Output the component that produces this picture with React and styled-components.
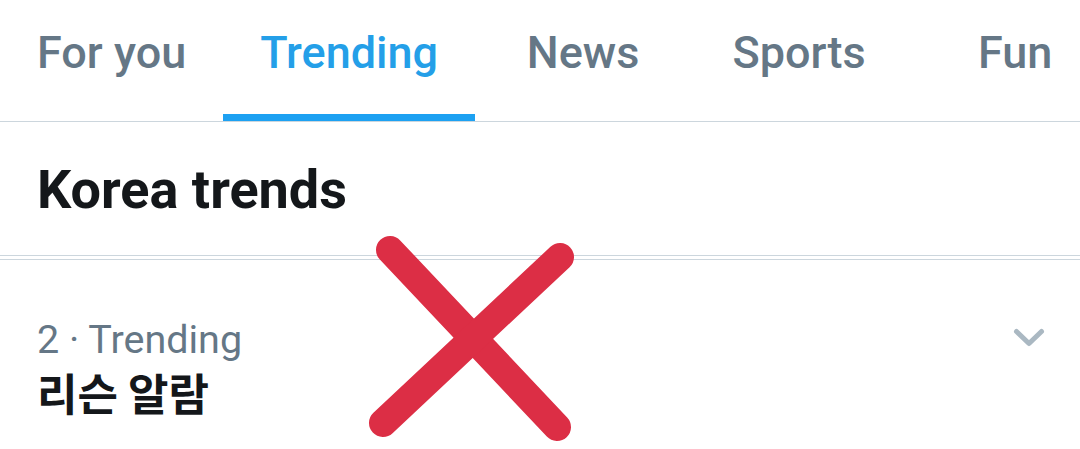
import React from 'react';
import styled, { createGlobalStyle } from 'styled-components';

const colors = {
    blue: '#1da1f2',
    blueText: '#249fe8',
    grey: '#657786',
    black: '#14171a',
    line: '#ccd6dd',
    chevron: '#aab8c2',
    red: '#dc2e45',
};

const GlobalStyle = createGlobalStyle`
    html, body {
        margin: 0;
        padding: 0;
        background: #fff;
    }
    body {
        font-family: Roboto, "Noto Sans CJK KR", sans-serif;
        -webkit-font-smoothing: antialiased;
    }
`;

const Page = styled.div`
    position: relative;
    width: 1080px;
    height: 449px;
    overflow: hidden;
    background: #fff;
`;

const TabBar = styled.nav`
    display: flex;
    height: 122px;
    box-sizing: border-box;
    border-bottom: 1px solid ${colors.line};
    overflow: hidden;
`;

const Tab = styled.div`
    flex: 0 0 auto;
    min-width: 216px;
    height: 122px;
    box-sizing: border-box;
    padding: 26px 37px 0;
    margin-bottom: -1px;
    text-align: center;
    font-size: 45px;
    line-height: 53px;
    font-weight: 500;
    color: ${(p) => (p.active ? colors.blueText : colors.grey)};
    border-bottom: 8px solid ${(p) => (p.active ? colors.blue : 'transparent')};
`;

const Header = styled.header`
    padding: 36px 37px 34px;
    border-bottom: 1px solid ${colors.line};
`;

const Title = styled.h1`
    margin: 0;
    font-size: 54px;
    line-height: 63px;
    font-weight: 700;
    color: ${colors.black};
`;

const Trend = styled.div`
    display: flex;
    justify-content: space-between;
    align-items: flex-start;
    margin-top: 3px;
    border-top: 1px solid ${colors.line};
    padding: 56px 35px 0 37px;
`;

const Meta = styled.div`
    font-size: 39.5px;
    line-height: 47px;
    color: ${colors.grey};
`;

const Name = styled.div`
    font-family: "Noto Sans CJK KR", Roboto, sans-serif;
    font-size: 44px;
    line-height: 58px;
    font-weight: 700;
    color: ${colors.black};
`;

const Chevron = styled.svg`
    margin-top: 12px;
    width: 32px;
    height: 20px;
`;

const Cross = styled.svg`
    position: absolute;
    left: 360px;
    top: 230px;
    width: 230px;
    height: 219px;
    pointer-events: none;
`;

const tabs = ['For you', 'Trending', 'News', 'Sports', 'Fun'];

export default function App() {
    return (
        <Page>
            <GlobalStyle />
            <TabBar>
                {tabs.map((t) => (
                    <Tab key={t} active={t === 'Trending'}>{t}</Tab>
                ))}
            </TabBar>
            <Header>
                <Title>Korea trends</Title>
            </Header>
            <Trend>
                <div>
                    <Meta>2 · Trending</Meta>
                    <Name>리슨 알람</Name>
                </div>
                <Chevron viewBox="0 0 32 20">
                    <path d="M3.5 3.5 L16 15.5 L28.5 3.5" fill="none" stroke={colors.chevron} strokeWidth="5" strokeLinecap="round" strokeLinejoin="round" />
                </Chevron>
            </Trend>
            <Cross viewBox="0 0 230 219">
                <g stroke={colors.red} strokeWidth="28" strokeLinecap="round" fill="none">
                    <path d="M30 20 L197 197" />
                    <path d="M200 27 L23 193" />
                </g>
            </Cross>
        </Page>
    );
}
